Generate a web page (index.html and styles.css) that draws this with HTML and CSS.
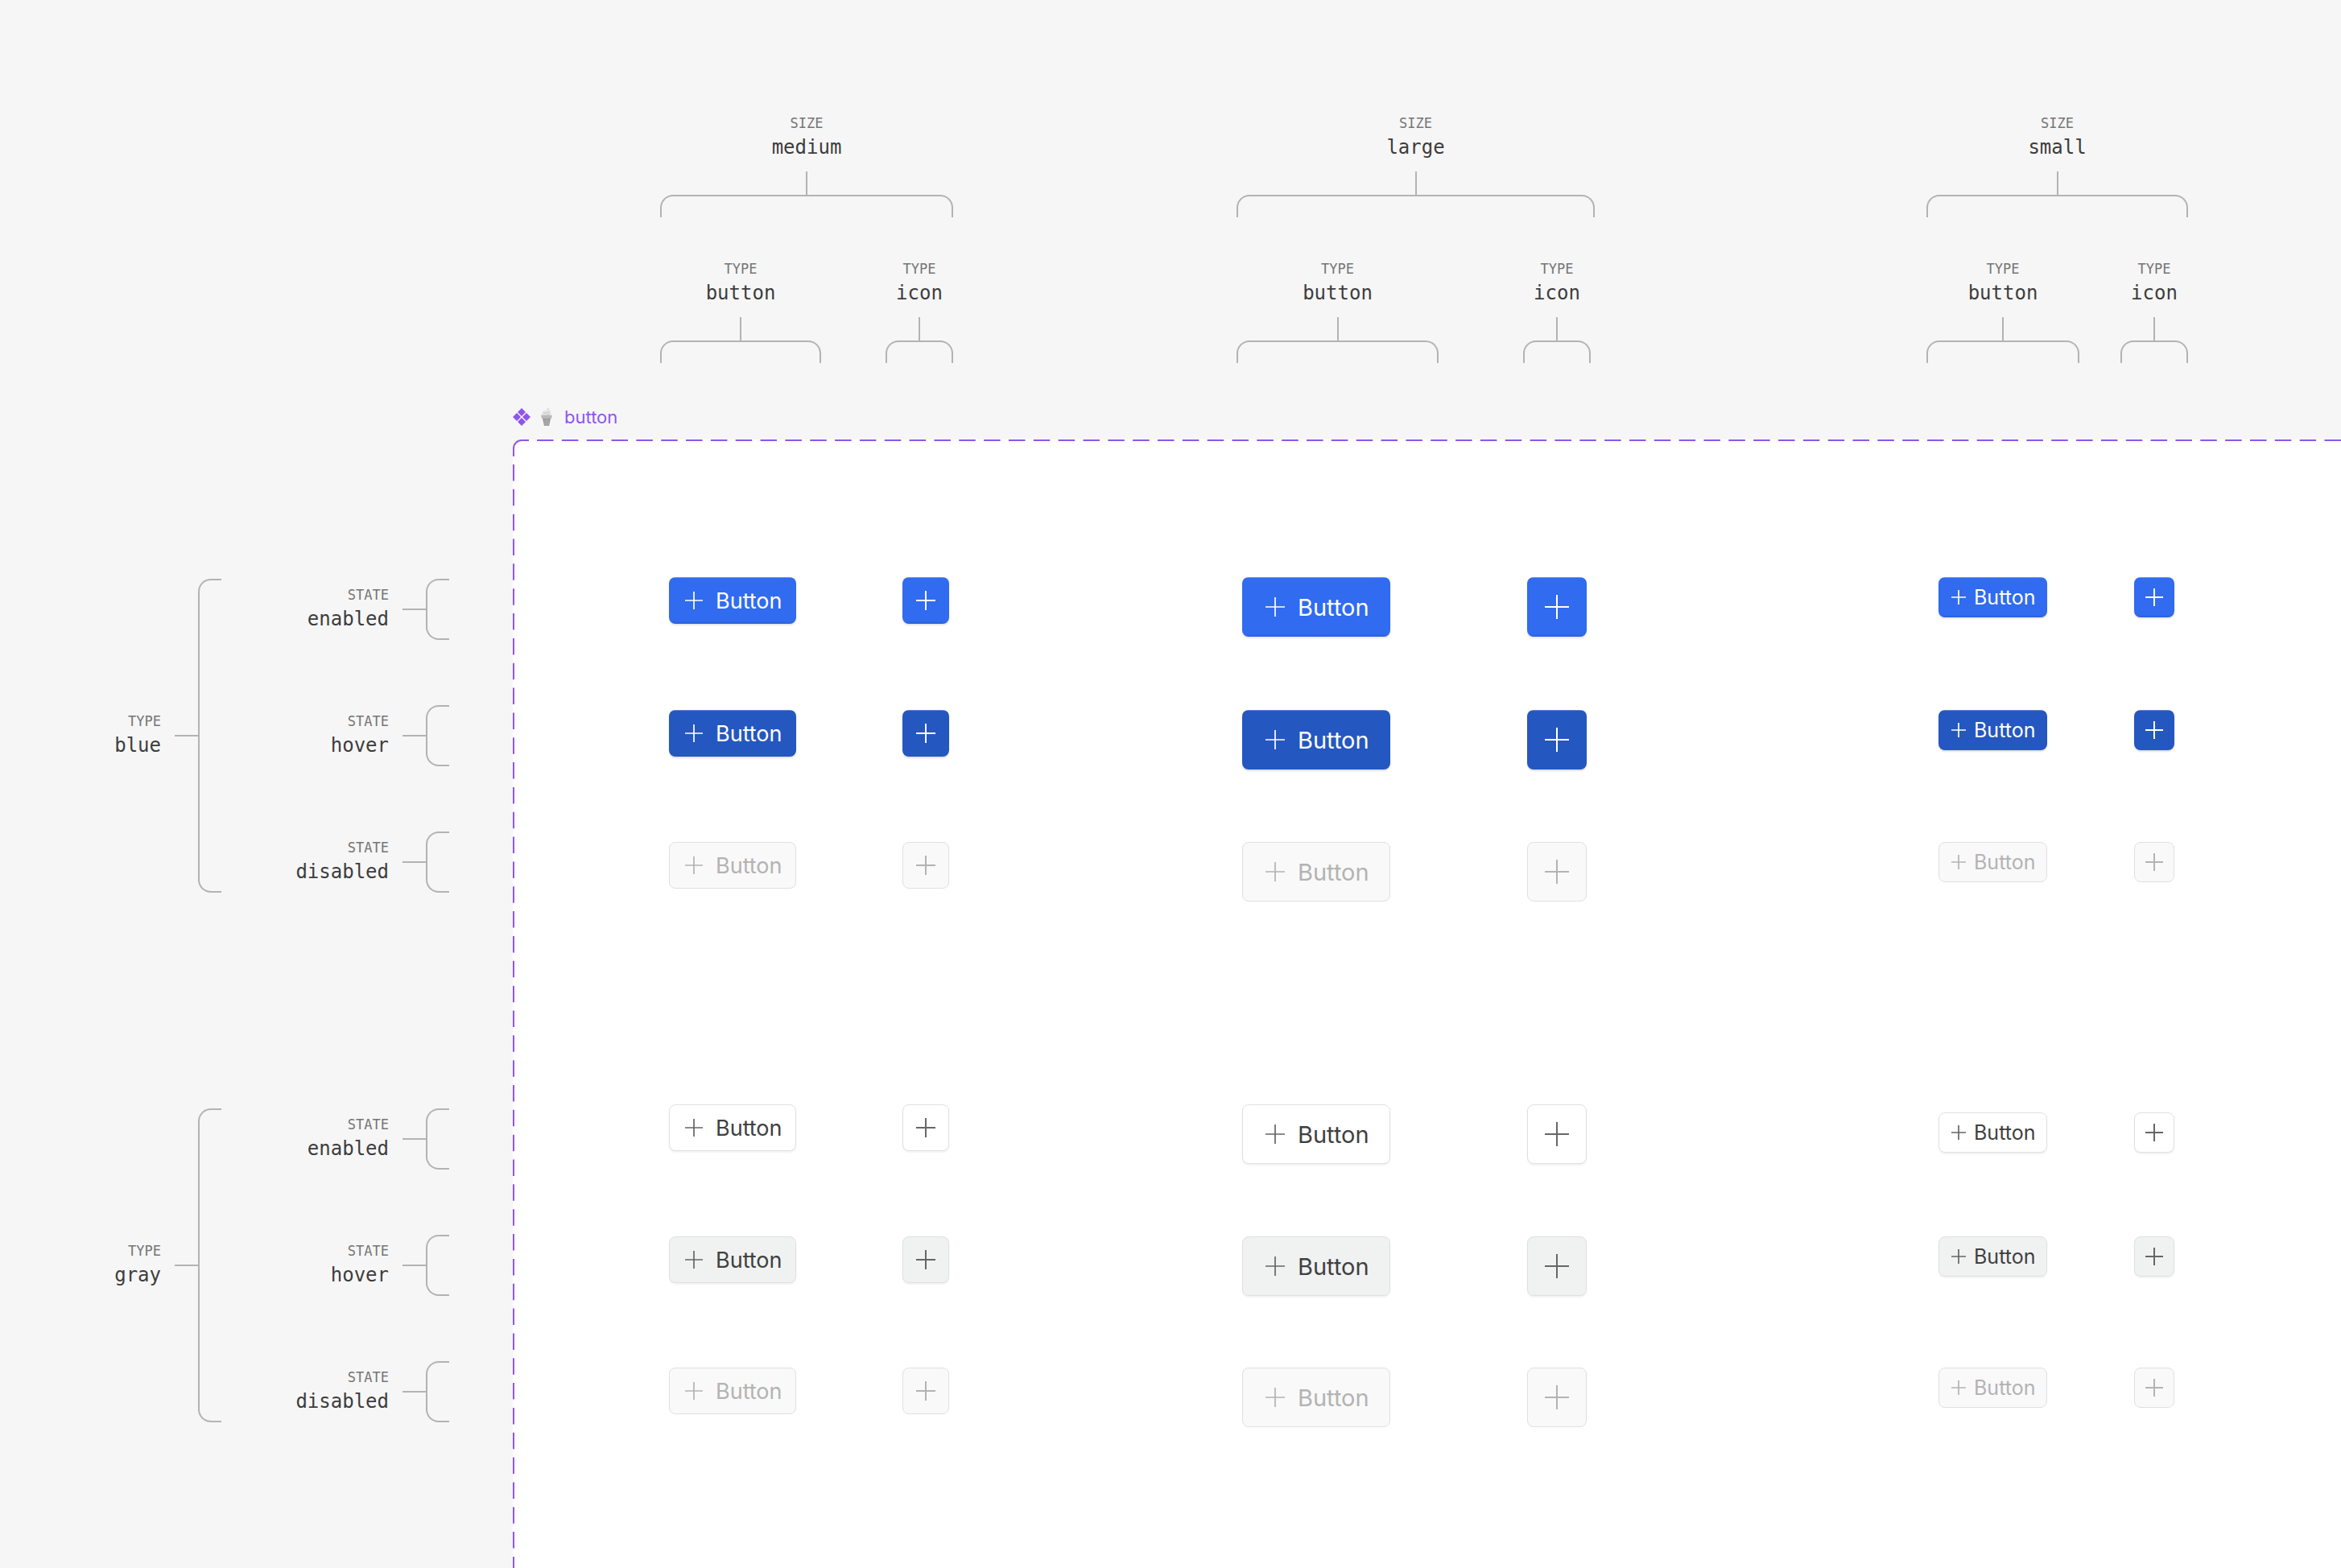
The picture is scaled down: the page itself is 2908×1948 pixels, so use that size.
FILE: index.html
```html
<!DOCTYPE html>
<html lang="en">
<head>
    <meta charset="UTF-8">
    <meta name="viewport" content="width=device-width, initial-scale=1.0">
    <title>Button</title>
    <link rel="stylesheet" href="styles.css">
</head>
<body>
    <!-- shared plus icon -->
    <svg class="symbols" aria-hidden="true">
        <symbol id="plus-18" viewBox="0 0 18 18"><path d="M9 0v18M0 9h18" /></symbol>
        <symbol id="plus-22" viewBox="0 0 22 22"><path d="M11 0v22M0 11h22" /></symbol>
        <symbol id="plus-24" viewBox="0 0 24 24"><path d="M12 0v24M0 12h24" /></symbol>
        <symbol id="plus-30" viewBox="0 0 30 30"><path d="M15 0v30M0 15h30" /></symbol>
    </svg>

    <header class="sizes">
        <div class="size size-medium">
            <div class="axis">
                <span class="axis-name">SIZE</span>
                <span class="axis-value">medium</span>
                <div class="stem"></div>
                <div class="bracket"></div>
            </div>
            <div class="kinds">
                <div class="axis kind-button">
                    <span class="axis-name">TYPE</span>
                    <span class="axis-value">button</span>
                    <div class="stem"></div>
                    <div class="bracket"></div>
                </div>
                <div class="axis kind-icon">
                    <span class="axis-name">TYPE</span>
                    <span class="axis-value">icon</span>
                    <div class="stem"></div>
                    <div class="bracket"></div>
                </div>
            </div>
        </div>
        <div class="size size-large">
            <div class="axis">
                <span class="axis-name">SIZE</span>
                <span class="axis-value">large</span>
                <div class="stem"></div>
                <div class="bracket"></div>
            </div>
            <div class="kinds">
                <div class="axis kind-button">
                    <span class="axis-name">TYPE</span>
                    <span class="axis-value">button</span>
                    <div class="stem"></div>
                    <div class="bracket"></div>
                </div>
                <div class="axis kind-icon">
                    <span class="axis-name">TYPE</span>
                    <span class="axis-value">icon</span>
                    <div class="stem"></div>
                    <div class="bracket"></div>
                </div>
            </div>
        </div>
        <div class="size size-small">
            <div class="axis">
                <span class="axis-name">SIZE</span>
                <span class="axis-value">small</span>
                <div class="stem"></div>
                <div class="bracket"></div>
            </div>
            <div class="kinds">
                <div class="axis kind-button">
                    <span class="axis-name">TYPE</span>
                    <span class="axis-value">button</span>
                    <div class="stem"></div>
                    <div class="bracket"></div>
                </div>
                <div class="axis kind-icon">
                    <span class="axis-name">TYPE</span>
                    <span class="axis-value">icon</span>
                    <div class="stem"></div>
                    <div class="bracket"></div>
                </div>
            </div>
        </div>
    </header>

    <div class="set-title">
        <svg class="set-icon" width="22" height="22" viewBox="0 0 22 22" aria-hidden="true">
            <path d="M11 0l5 5-5 5-5-5zM5 6l5 5-5 5-5-5zM17 6l5 5-5 5-5-5zM11 12l5 5-5 5-5-5z" />
        </svg>
        <svg class="cone-icon" width="16" height="24" viewBox="0 0 16 24" aria-hidden="true">
            <path d="M8 1c2-1 4 0 3 2 2 0 3 2 2 4 1 1 1 3 0 4H3C1 10 1 8 3 7 2 5 4 4 6 4c2 0 3-1 2-3z" fill="#e4e4e4" />
            <path d="M4 7c3 1 6 0 7-2M3 10c3 1 7 0 9-2" fill="none" stroke="#c2c2c2" />
            <path d="M1 10h14l-1 4H2z" fill="#b9b9b9" />
            <path d="M3 14h10l-2 9H5z" fill="#989898" />
            <path d="M6 15v7M8 15v8M10 15v7" stroke="#b4b4b4" fill="none" />
        </svg>
        <h1>button</h1>
    </div>

    <div class="board">
        <aside class="types">
            <div class="type">
                <div class="side-axis type-axis">
                    <div class="side-text">
                        <span class="axis-name">TYPE</span>
                        <span class="axis-value">blue</span>
                    </div>
                    <div class="side-stem"></div>
                    <div class="side-bracket"></div>
                </div>
                <div class="states">
                    <div class="side-axis">
                        <div class="side-text">
                            <span class="axis-name">STATE</span>
                            <span class="axis-value">enabled</span>
                        </div>
                        <div class="side-stem"></div>
                        <div class="side-bracket"></div>
                    </div>
                    <div class="side-axis">
                        <div class="side-text">
                            <span class="axis-name">STATE</span>
                            <span class="axis-value">hover</span>
                        </div>
                        <div class="side-stem"></div>
                        <div class="side-bracket"></div>
                    </div>
                    <div class="side-axis">
                        <div class="side-text">
                            <span class="axis-name">STATE</span>
                            <span class="axis-value">disabled</span>
                        </div>
                        <div class="side-stem"></div>
                        <div class="side-bracket"></div>
                    </div>
                </div>
            </div>
            <div class="type">
                <div class="side-axis type-axis">
                    <div class="side-text">
                        <span class="axis-name">TYPE</span>
                        <span class="axis-value">gray</span>
                    </div>
                    <div class="side-stem"></div>
                    <div class="side-bracket"></div>
                </div>
                <div class="states">
                    <div class="side-axis">
                        <div class="side-text">
                            <span class="axis-name">STATE</span>
                            <span class="axis-value">enabled</span>
                        </div>
                        <div class="side-stem"></div>
                        <div class="side-bracket"></div>
                    </div>
                    <div class="side-axis">
                        <div class="side-text">
                            <span class="axis-name">STATE</span>
                            <span class="axis-value">hover</span>
                        </div>
                        <div class="side-stem"></div>
                        <div class="side-bracket"></div>
                    </div>
                    <div class="side-axis">
                        <div class="side-text">
                            <span class="axis-name">STATE</span>
                            <span class="axis-value">disabled</span>
                        </div>
                        <div class="side-stem"></div>
                        <div class="side-bracket"></div>
                    </div>
                </div>
            </div>
        </aside>

        <main class="panel">
            <svg class="panel-outline" aria-hidden="true">
                <path d="M1 21V11A10 10 0 0 1 11 1H20" />
                <line class="dashes" x1="30" y1="1" x2="100%" y2="1" />
                <line class="dashes" x1="1" y1="31" x2="1" y2="100%" />
            </svg>

            <section class="variants medium">
                <button class="btn blue"><svg><use href="#plus-22" /></svg>Button</button>
                <button class="btn icon blue" aria-label="Add"><svg><use href="#plus-24" /></svg></button>
                <button class="btn blue hover"><svg><use href="#plus-22" /></svg>Button</button>
                <button class="btn icon blue hover" aria-label="Add"><svg><use href="#plus-24" /></svg></button>
                <button class="btn blue" disabled><svg><use href="#plus-22" /></svg>Button</button>
                <button class="btn icon blue" aria-label="Add" disabled><svg><use href="#plus-24" /></svg></button>
                <button class="btn gray"><svg><use href="#plus-22" /></svg>Button</button>
                <button class="btn icon gray" aria-label="Add"><svg><use href="#plus-24" /></svg></button>
                <button class="btn gray hover"><svg><use href="#plus-22" /></svg>Button</button>
                <button class="btn icon gray hover" aria-label="Add"><svg><use href="#plus-24" /></svg></button>
                <button class="btn gray" disabled><svg><use href="#plus-22" /></svg>Button</button>
                <button class="btn icon gray" aria-label="Add" disabled><svg><use href="#plus-24" /></svg></button>
            </section>

            <section class="variants large">
                <button class="btn blue"><svg><use href="#plus-24" /></svg>Button</button>
                <button class="btn icon blue" aria-label="Add"><svg><use href="#plus-30" /></svg></button>
                <button class="btn blue hover"><svg><use href="#plus-24" /></svg>Button</button>
                <button class="btn icon blue hover" aria-label="Add"><svg><use href="#plus-30" /></svg></button>
                <button class="btn blue" disabled><svg><use href="#plus-24" /></svg>Button</button>
                <button class="btn icon blue" aria-label="Add" disabled><svg><use href="#plus-30" /></svg></button>
                <button class="btn gray"><svg><use href="#plus-24" /></svg>Button</button>
                <button class="btn icon gray" aria-label="Add"><svg><use href="#plus-30" /></svg></button>
                <button class="btn gray hover"><svg><use href="#plus-24" /></svg>Button</button>
                <button class="btn icon gray hover" aria-label="Add"><svg><use href="#plus-30" /></svg></button>
                <button class="btn gray" disabled><svg><use href="#plus-24" /></svg>Button</button>
                <button class="btn icon gray" aria-label="Add" disabled><svg><use href="#plus-30" /></svg></button>
            </section>

            <section class="variants small">
                <button class="btn blue"><svg><use href="#plus-18" /></svg>Button</button>
                <button class="btn icon blue" aria-label="Add"><svg><use href="#plus-22" /></svg></button>
                <button class="btn blue hover"><svg><use href="#plus-18" /></svg>Button</button>
                <button class="btn icon blue hover" aria-label="Add"><svg><use href="#plus-22" /></svg></button>
                <button class="btn blue" disabled><svg><use href="#plus-18" /></svg>Button</button>
                <button class="btn icon blue" aria-label="Add" disabled><svg><use href="#plus-22" /></svg></button>
                <button class="btn gray lowered"><svg><use href="#plus-18" /></svg>Button</button>
                <button class="btn icon gray lowered" aria-label="Add"><svg><use href="#plus-22" /></svg></button>
                <button class="btn gray hover"><svg><use href="#plus-18" /></svg>Button</button>
                <button class="btn icon gray hover" aria-label="Add"><svg><use href="#plus-22" /></svg></button>
                <button class="btn gray" disabled><svg><use href="#plus-18" /></svg>Button</button>
                <button class="btn icon gray" aria-label="Add" disabled><svg><use href="#plus-22" /></svg></button>
            </section>
        </main>
    </div>
</body>
</html>
```
FILE: styles.css
```css
* {
    box-sizing: border-box;
}
body {
    margin: 0;
    min-height: 100vh;
    display: flex;
    flex-direction: column;
    background-color: #f6f6f6;
    font-family: Inter, sans-serif;
}
.symbols {
    position: absolute;
    width: 0;
    height: 0;
}

/* axis labels */
.axis {
    display: flex;
    flex-direction: column;
    align-items: center;
}
.axis-name,
.axis-value {
    display: block;
    font-family: "DejaVu Sans Mono", monospace;
}
.axis-name {
    font-size: 17px;
    line-height: 20px;
    color: #757575;
}
.axis-value {
    margin-top: 4px;
    font-size: 24px;
    line-height: 32px;
    color: #3d3d3d;
}
.stem {
    width: 2px;
    height: 29px;
    margin-top: 14px;
    background-color: #b3b3b3;
}
.bracket {
    align-self: stretch;
    height: 28px;
    border: 2px solid #b3b3b3;
    border-bottom: none;
    border-radius: 16px 16px 0 0;
}

/* top header */
.sizes {
    display: grid;
    grid-template-columns: 716fr 857fr 515fr;
    padding: 143px 0 0 820px;
}
.size-medium {
    width: 364px;
}
.size-large {
    width: 445px;
}
.size-small {
    width: 325px;
}
.kinds {
    display: flex;
    gap: 80px;
    margin-top: 54px;
}
.kind-button {
    width: 200px;
}
.kind-icon {
    width: 84px;
}
.size-large .kinds {
    gap: 105px;
}
.size-large .kind-button {
    width: 251px;
}
.size-small .kinds {
    gap: 51px;
}
.size-small .kind-button {
    width: 190px;
}

/* component set name */
.set-title {
    display: flex;
    align-items: center;
    margin: 53px 0 14px 637px;
}
.set-title h1 {
    margin: 0 0 0 14px;
    font-size: 22px;
    font-weight: 400;
    line-height: 28px;
    color: #8f55ee;
}
.set-icon {
    fill: #8f55ee;
}
.cone-icon {
    margin-left: 12px;
}

/* left column */
.board {
    display: flex;
    flex: 1;
}
.types {
    width: 637px;
    padding-top: 173px;
    display: flex;
    flex-direction: column;
    gap: 268px;
}
.type {
    display: flex;
}
.states {
    display: flex;
    flex-direction: column;
    gap: 81px;
}
.side-axis {
    display: flex;
    align-items: center;
    height: 76px;
}
.type-axis {
    height: auto;
}
.side-text {
    width: 208px;
    text-align: right;
}
.type-axis .side-text {
    width: 200px;
}
.side-stem {
    width: 29px;
    height: 2px;
    margin-left: 17px;
    background-color: #b3b3b3;
}
.side-bracket {
    align-self: stretch;
    width: 29px;
    border: 2px solid #b3b3b3;
    border-right: none;
    border-radius: 16px 0 0 16px;
}

/* panel with all variants */
.panel {
    flex: 1;
    position: relative;
    display: grid;
    grid-template-columns: 716fr 857fr 515fr;
    padding: 171px 0 0 183px;
    background-color: #fff;
    border-top-left-radius: 11px;
}
.panel-outline {
    position: absolute;
    top: 0;
    left: 0;
    width: 100%;
    height: 100%;
    fill: none;
    stroke: #8f55ee;
    stroke-width: 2;
}
.dashes {
    stroke-dasharray: 20.5 10.34;
}
.variants {
    display: grid;
    grid-template-columns: 290px 74px;
    grid-template-rows: 165px 164px 326px 164px 163px 74px;
    align-content: start;
    align-items: start;
    padding-left: 11px;
}
.variants.large {
    grid-template-columns: 354px 74px;
    padding-left: 7px;
}
.variants.small {
    grid-template-columns: 243px 50px;
    padding-left: 15px;
}

/* buttons */
.btn {
    display: flex;
    align-items: center;
    padding: 0;
    border: 1px solid #e0e0e0;
    border-radius: 8px;
    font-family: Inter, sans-serif;
    font-weight: 400;
    white-space: nowrap;
    cursor: pointer;
}
.btn svg {
    flex: none;
    fill: none;
    stroke: currentColor;
    stroke-width: 1.7;
}
.btn.icon svg {
    stroke-width: 2;
}
.medium .btn {
    width: 158px;
    height: 58px;
    gap: 16px;
    padding-left: 19px;
    font-size: 27px;
}
.medium .btn svg {
    width: 22px;
    height: 22px;
}
.medium .btn.icon {
    width: 58px;
}
.medium .btn.icon svg {
    width: 24px;
    height: 24px;
}
.large .btn {
    width: 184px;
    height: 74px;
    gap: 16px;
    padding-left: 28px;
    font-size: 29px;
}
.large .btn svg {
    width: 24px;
    height: 24px;
}
.large .btn.icon {
    width: 74px;
}
.large .btn.icon svg {
    width: 30px;
    height: 30px;
}
.small .btn {
    width: 135px;
    height: 50px;
    gap: 10px;
    padding-left: 15px;
    font-size: 25px;
}
.small .btn svg {
    width: 18px;
    height: 18px;
}
.small .btn.icon {
    width: 50px;
}
.small .btn.icon svg {
    width: 22px;
    height: 22px;
}
.variants .btn.icon {
    justify-content: center;
    padding-left: 0;
}
.btn.lowered {
    margin-top: 10px;
}
.btn.blue {
    border-color: transparent;
    background-color: #306bf0;
    background-origin: border-box;
    color: #fff;
    box-shadow: 0 2px 2px rgba(0,0,0,0.1);
    background-image: linear-gradient(#6c93ec 0 1px, transparent 1px calc(100% - 3px), #2a5fd6 100%);
}
.btn.blue.hover {
    background-color: #2557c0;
    background-image: linear-gradient(#5c82cf 0 1px, transparent 1px);
    box-shadow: 0 2px 2px rgba(0,0,0,0.12);
}
.btn.gray {
    background-color: #fff;
    color: #404040;
    box-shadow: 0 2px 2px rgba(0,0,0,0.05);
}
.btn.gray svg {
    color: #666;
}
.btn.gray.hover {
    background-color: #f0f2f2;
}
.btn:disabled {
    border-color: #e0e0e0;
    background: #f9f9f9;
    color: #b3b3b3;
    box-shadow: none;
    cursor: default;
}
.btn:disabled svg {
    color: #b3b3b3;
}
```
